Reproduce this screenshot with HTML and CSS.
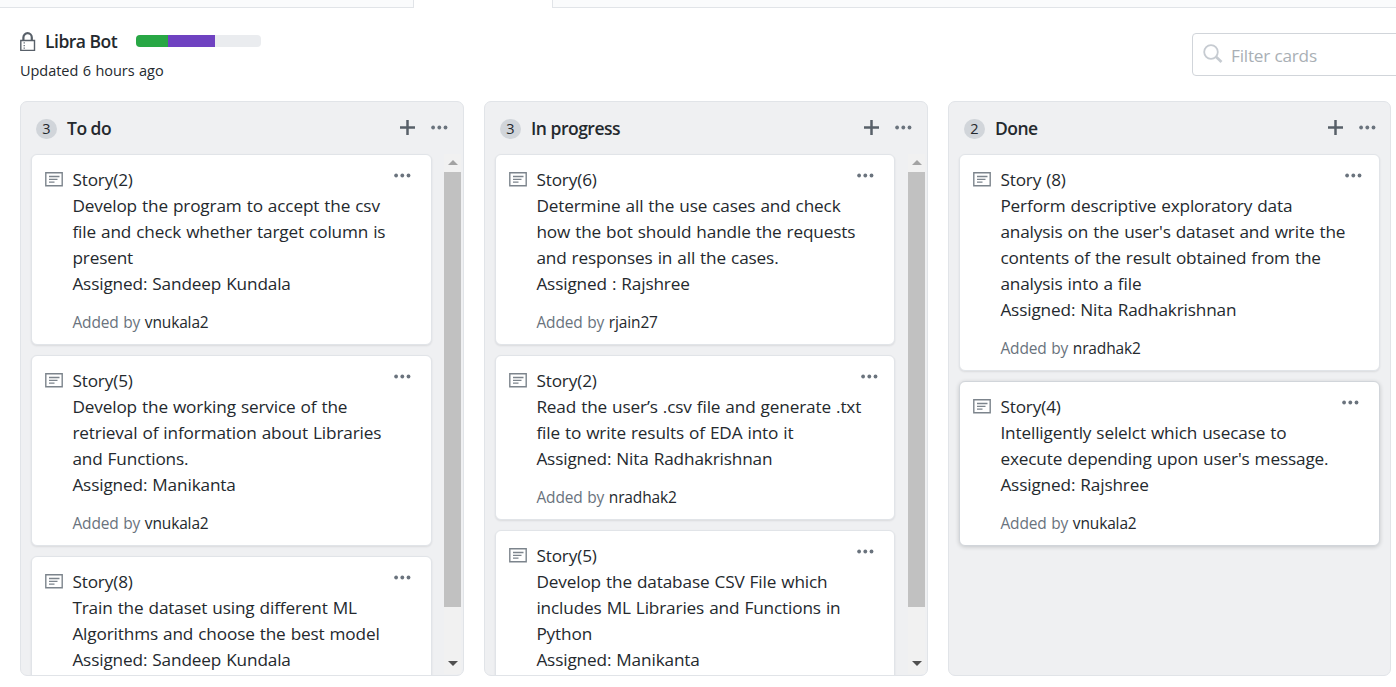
FILE: index.html
```html
<!DOCTYPE html>
<html lang="en">
<head>
<meta charset="utf-8">
<title>Libra Bot</title>
<link rel="stylesheet" href="styles.css">
</head>
<body>
<svg width="0" height="0" class="defs">
  <symbol id="plus" viewBox="0 0 15 15"><path d="M7.5 0v15M0 7.5h15" stroke="#586069" stroke-width="2.5" fill="none"/></symbol>
  <symbol id="dots" viewBox="0 0 17 5"><g fill="#6a737d"><circle cx="2.1" cy="2.5" r="1.9"/><circle cx="8.3" cy="2.5" r="1.9"/><circle cx="14.5" cy="2.5" r="1.9"/></g></symbol>
  <symbol id="note" viewBox="0 0 18 15"><path d="M.8.8h16.400v13H.8z" fill="none" stroke="#7c848c" stroke-width="1.400"/><path d="M4 4.500h10.500M4 7.300h8.500M4 10.200h5.500" stroke="#7c848c" stroke-width="1.300"/></symbol>
</svg>
<div class="tabs"><div class="tabs-left"></div><div class="tabs-active"></div><div class="tabs-right"></div></div>
<header class="project">
  <div class="info">
    <div class="title">
      <svg class="lock" width="16" height="20" viewBox="0 0 16 20"><path d="M3.400 8.500V5.500a4.200 4.300 0 0 1 8.400 0V8.500" fill="none" stroke="#586069" stroke-width="2.200"/><path d="M.8 8.500h13.700v9.900H.8z" fill="#fff" stroke="#586069" stroke-width="1.400"/><path d="M4.200 10.300v7.500" stroke="#586069" stroke-width="1.200" stroke-dasharray="1.300 1.300"/></svg>
      <h1>Libra Bot</h1>
      <div class="progress"><i class="green"></i><i class="purple"></i></div>
    </div>
    <p class="updated">Updated 6 hours ago</p>
  </div>
  <div class="filter">
    <svg width="21" height="20" viewBox="0 0 21 20"><circle cx="8" cy="8" r="6.800" fill="none" stroke="#c6cbd1" stroke-width="1.800"/><path d="M13 12.800l5.500 5.200" stroke="#c6cbd1" stroke-width="2.700"/></svg>
    <span>Filter cards</span>
  </div>
</header>
<main class="board">
  <section class="column">
    <div class="head"><span class="count">3</span><h2>To do</h2><svg class="plus"><use href="#plus"/></svg><svg class="dots"><use href="#dots"/></svg></div>
    <div class="body">
      <div class="cards">
        <article class="card"><svg class="note"><use href="#note"/></svg><div class="text"><p>Story(2)<br>Develop the program to accept the csv<br>file and check whether target column is<br>present<br>Assigned: Sandeep Kundala</p><p class="by">Added by <b>vnukala2</b></p></div><svg class="dots"><use href="#dots"/></svg></article>
        <article class="card"><svg class="note"><use href="#note"/></svg><div class="text"><p>Story(5)<br>Develop the working service of the<br>retrieval of information about Libraries<br>and Functions.<br>Assigned: Manikanta</p><p class="by">Added by <b>vnukala2</b></p></div><svg class="dots"><use href="#dots"/></svg></article>
        <article class="card"><svg class="note"><use href="#note"/></svg><div class="text"><p>Story(8)<br>Train the dataset using different ML<br>Algorithms and choose the best model<br>Assigned: Sandeep Kundala</p></div><svg class="dots"><use href="#dots"/></svg></article>
      </div>
      <div class="scroll"><i class="up"></i><i class="thumb"></i><i class="down"></i></div>
    </div>
  </section>
  <section class="column">
    <div class="head"><span class="count">3</span><h2>In progress</h2><svg class="plus"><use href="#plus"/></svg><svg class="dots"><use href="#dots"/></svg></div>
    <div class="body">
      <div class="cards">
        <article class="card"><svg class="note"><use href="#note"/></svg><div class="text"><p>Story(6)<br>Determine all the use cases and check<br>how the bot should handle the requests<br>and responses in all the cases.<br>Assigned : Rajshree</p><p class="by">Added by <b>rjain27</b></p></div><svg class="dots"><use href="#dots"/></svg></article>
        <article class="card"><svg class="note"><use href="#note"/></svg><div class="text"><p>Story(2)<br>Read the user’s .csv file and generate .txt<br>file to write results of EDA into it<br>Assigned: Nita Radhakrishnan</p><p class="by">Added by <b>nradhak2</b></p></div><svg class="dots"><use href="#dots"/></svg></article>
        <article class="card"><svg class="note"><use href="#note"/></svg><div class="text"><p>Story(5)<br>Develop the database CSV File which<br>includes ML Libraries and Functions in<br>Python<br>Assigned: Manikanta</p></div><svg class="dots"><use href="#dots"/></svg></article>
      </div>
      <div class="scroll"><i class="up"></i><i class="thumb"></i><i class="down"></i></div>
    </div>
  </section>
  <section class="column done">
    <div class="head"><span class="count">2</span><h2>Done</h2><svg class="plus"><use href="#plus"/></svg><svg class="dots"><use href="#dots"/></svg></div>
    <div class="body">
      <div class="cards">
        <article class="card"><svg class="note"><use href="#note"/></svg><div class="text"><p>Story (8)<br>Perform descriptive exploratory data<br>analysis on the user's dataset and write the<br>contents of the result obtained from the<br>analysis into a file<br>Assigned: Nita Radhakrishnan</p><p class="by">Added by <b>nradhak2</b></p></div><svg class="dots"><use href="#dots"/></svg></article>
        <article class="card hover"><svg class="note"><use href="#note"/></svg><div class="text"><p>Story(4)<br>Intelligently selelct which usecase to<br>execute depending upon user's message.<br>Assigned: Rajshree</p><p class="by">Added by <b>vnukala2</b></p></div><svg class="dots"><use href="#dots"/></svg></article>
      </div>
    </div>
  </section>
</main>
</body>
</html>
```
FILE: styles.css
```css
* { box-sizing: border-box; margin: 0; padding: 0; }
body { width: 1396px; height: 687px; overflow: hidden; background: #fff; color: #24292e; font-family: "Open Sans", "Noto Sans", sans-serif; font-size: 17.2px; font-weight: 380; line-height: 26px; }
svg { display: block; flex: none; }
.defs { position: absolute; }
.tabs { display: flex; height: 8px; }
.tabs-left, .tabs-right { background: #fafbfc; border-bottom: 1px solid #e1e4e8; }
.tabs-left { width: 414px; border-right: 1px solid #e1e4e8; }
.tabs-active { width: 138px; }
.tabs-right { flex: 1; border-left: 1px solid #e1e4e8; }
.project { display: flex; justify-content: space-between; height: 93px; padding: 20px 0 0 20px; }
.title { display: flex; align-items: center; height: 27px; }
h1 { font-size: 17.5px; font-weight: 560; line-height: 26px; margin: -2px 0 0 9px; width: 91px; letter-spacing: -.5px; white-space: nowrap; }
.progress { display: flex; width: 125px; height: 12px; margin-top: -1px; border-radius: 4px; overflow: hidden; background: #eaecef; }
.green { width: 32px; background: #28a745; }
.purple { width: 47px; background: #6f42c1; }
.updated { font-size: 14.5px; line-height: 22px; margin-top: 5px; letter-spacing: -.05px; word-spacing: .8px; }
.filter { display: flex; width: 230px; height: 43px; margin: 5px -26px 0 0; padding: 10px 0 0 10px; border: 1px solid #d1d5da; border-radius: 4px; color: #a9afb5; letter-spacing: -.2px; }
.filter span { line-height: 24px; margin-left: 7px; }
.board { display: flex; gap: 20px; padding-left: 20px; }
.column { width: 444px; height: 575px; flex: none; background: #eff0f2; border: 1px solid #e1e4e8; border-radius: 7px; overflow: hidden; }
.done { width: 443px; }
.head { display: flex; align-items: center; height: 52px; padding: 2px 15px 0; }
.count { width: 21px; height: 20px; border-radius: 10px; background: #d1d5da; font-size: 14.5px; font-weight: 450; line-height: 20px; text-align: center; margin-top: -1px; }
h2 { flex: 1; margin: -2px 0 0 10px; font-size: 17.5px; line-height: 26px; font-weight: 560; letter-spacing: -.5px; }
.plus { width: 15px; height: 15px; margin-top: -3px; }
.head .dots { margin: -4px 0 0 16px; }
.done .head { padding-right: 14px; }
.dots { width: 17px; height: 5px; }
.body { display: flex; height: 521px; }
.cards { width: 401px; margin-left: 10px; flex: none; }
.column:nth-child(2) .cards { width: 400px; margin-right: 1px; }
.done .cards { width: 421px; }
.card { display: flex; margin-bottom: 10px; padding: 12px 20px 8px 13px; background: #fff; border: 1px solid #e1e4e8; border-radius: 6px; box-shadow: 0 1px 2px rgba(27,31,35,.1); }
.card.hover { border-color: #d1d5da; box-shadow: 0 1px 4px rgba(27,31,35,.2); }
.note { width: 18px; height: 15px; margin-top: 5px; }
.text { flex: 1; margin-left: 9.400px; white-space: nowrap; letter-spacing: -.14px; word-spacing: .7px; }
.card .dots { margin-top: 6px; }
.by { margin: 12px 0 1px; font-size: 15.5px; color: #6a737d; }
.by b { font-weight: inherit; color: #24292e; }
.scroll { display: flex; flex-direction: column; align-items: center; width: 17px; height: 520px; margin-left: 12px; background: #f1f1f1; }
.scroll i { flex: none; }
.up { margin: 6px 0 7px; border: 5px solid transparent; border-top: 0; border-bottom-color: #a3a3a3; }
.thumb { width: 17px; height: 435px; background: #c1c1c1; }
.down { margin-top: 54px; border: 5px solid transparent; border-bottom: 0; border-top-color: #505050; }
```
